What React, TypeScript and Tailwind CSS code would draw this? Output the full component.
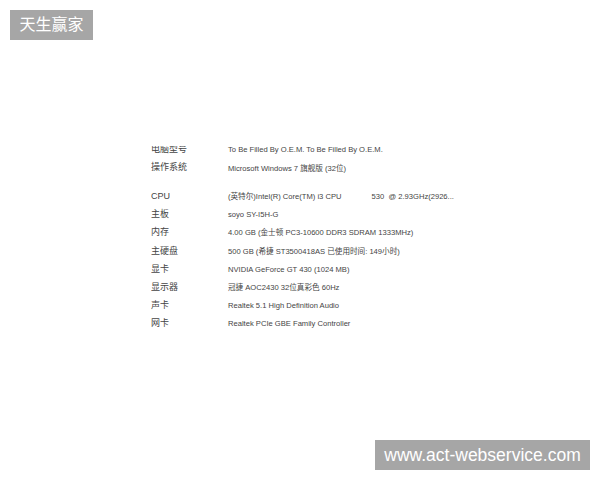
import React from "react";

const rowsA = [
  ["电脑型号", "To Be Filled By O.E.M. To Be Filled By O.E.M."],
  ["操作系统", "Microsoft Windows 7 旗舰版 (32位)"],
];

const rowsB = [
  ["主板", "soyo SY-I5H-G"],
  ["内存", "4.00 GB (金士顿 PC3-10600 DDR3 SDRAM 1333MHz)"],
  ["主硬盘", "500 GB (希捷 ST3500418AS 已使用时间: 149小时)"],
  ["显卡", "NVIDIA GeForce GT 430 (1024 MB)"],
  ["显示器", "冠捷 AOC2430 32位真彩色 60Hz"],
  ["声卡", "Realtek 5.1 High Definition Audio"],
  ["网卡", "Realtek PCIe GBE Family Controller"],
];

function Row({ label, value }: { label: string; value: React.ReactNode }) {
  return (
    <div className="flex h-[18.15px] items-center">
      <div className="w-[77px] shrink-0 text-[9px]">{label}</div>
      <div className="text-[7.6px] whitespace-nowrap">{value}</div>
    </div>
  );
}

export default function App() {
  return (
    <div
      className="relative h-[480px] w-[600px] overflow-hidden bg-white text-[#444444]"
      style={{ fontFamily: '"Liberation Sans", "Noto Sans CJK SC", sans-serif' }}
    >
      <div className="absolute left-[10px] top-[10px] flex h-[30px] w-[83px] items-center justify-center bg-[#a6a6a6] text-[16px] text-white">
        天生赢家
      </div>

      <div className="ml-[151px] mt-[146px] overflow-hidden">
        <div className="-mt-[5px]">
          {rowsA.map(([l, v]) => (
            <Row key={l} label={l} value={v} />
          ))}
          <div className="h-[10.5px]" />
          <Row
            label="CPU"
            value={
              <span>
                (英特尔)Intel(R) Core(TM) i3 CPU<span className="inline-block w-[30px]" />530&nbsp; @ 2.93GHz(2926...
              </span>
            }
          />
          {rowsB.map(([l, v]) => (
            <Row key={l} label={l} value={v} />
          ))}
        </div>
      </div>

      <div className="absolute left-[375px] top-[440px] flex h-[30px] w-[215px] items-center justify-center bg-[#a6a6a6] text-[17.5px] text-white">
        www.act-webservice.com
      </div>
    </div>
  );
}
